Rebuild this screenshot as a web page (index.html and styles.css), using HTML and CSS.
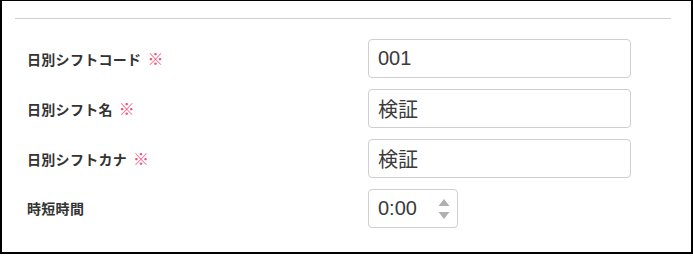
FILE: index.html
```html
<!DOCTYPE html>
<html lang="ja">
<head>
  <meta charset="UTF-8">
  <meta name="viewport" content="width=device-width, initial-scale=1.0">
  <title>日別シフト</title>
<link rel="stylesheet" href="styles.css">
</head>
<body>
  <div class="panel">
    <hr class="rule">
    <div class="form-row">
      <label class="form-label">日別シフトコード<span class="req">※</span></label>
      <input class="form-input" type="text" value="001">
    </div>
    <div class="form-row">
      <label class="form-label">日別シフト名<span class="req">※</span></label>
      <input class="form-input" type="text" value="検証">
    </div>
    <div class="form-row">
      <label class="form-label">日別シフトカナ<span class="req">※</span></label>
      <input class="form-input" type="text" value="検証">
    </div>
    <div class="form-row">
      <label class="form-label">時短時間</label>
      <div class="time-box">
        <input class="time-input" type="text" value="0:00">
        <svg class="spin" width="12" height="22" viewBox="0 0 12 22">
          <path d="M6 1 L11.5 8 L0.5 8 Z" fill="#b0b0b0"/>
          <path d="M0.5 14 L11.5 14 L6 21 Z" fill="#b0b0b0"/>
        </svg>
      </div>
    </div>
  </div>
</body>
</html>
```

FILE: styles.css
```css
html, body {
  margin: 0;
  padding: 0;
  background: #fff;
}
.panel {
  box-sizing: border-box;
  width: 693px;
  height: 254px;
  border: 2px solid #000;
  border-top-width: 1px;
  padding: 17px 20px 0 13px;
  font-family: "Liberation Sans", "Noto Sans CJK JP", sans-serif;
}
.rule {
  margin: 0 0 20px 0;
  border: 0;
  border-top: 1px solid #d0d0d0;
  height: 0;
}
.form-row {
  display: flex;
  align-items: center;
  height: 39px;
  margin-bottom: 11px;
  padding-left: 12px;
}

/* ラベル */
.form-label {
  width: 341px;
  font-size: 14px;
  font-weight: bold;
  color: #333;
  font-family: "Noto Sans CJK JP", sans-serif;
  margin-top: -2px;
  letter-spacing: 0.3px;
}
.req {
  color: #ef4f77;
  font-weight: normal;
  font-size: 16px;
  margin-left: 6px;
}

/* 入力欄 */
.form-input,
.time-box {
  box-sizing: border-box;
  height: 39px;
  border: 1px solid #cfcfcf;
  border-radius: 4px;
  background: #fff;
}
.form-input {
  width: 263px;
  padding: 0 9px;
  font-size: 20px;
  color: #3a3a3a;
  font-family: "Liberation Sans", "Noto Sans CJK JP", sans-serif;
  outline: none;
}
.time-box {
  width: 90px;
  display: flex;
  align-items: center;
  padding: 0 7px 0 9px;
}
.time-input {
  width: 56px;
  border: 0;
  padding: 0;
  font-size: 20px;
  color: #3a3a3a;
  font-family: "Liberation Sans", sans-serif;
  outline: none;
}
.spin {
  margin-left: auto;
  margin-top: 1px;
}
```
